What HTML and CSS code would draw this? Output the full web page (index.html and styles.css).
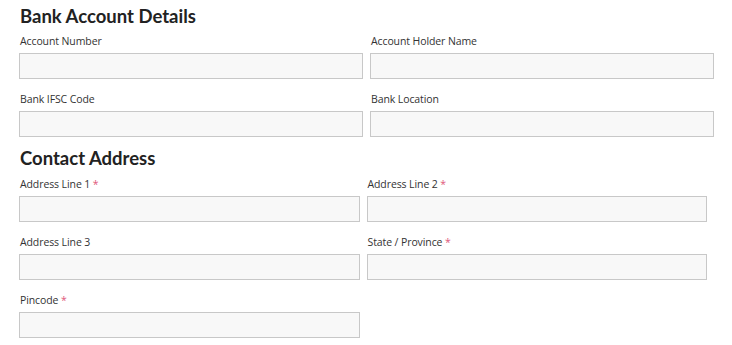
FILE: index.html
```html
<!DOCTYPE html>
<html>
<head>
<meta charset="utf-8">
<link rel="stylesheet" href="styles.css">
</head>
<body>
<div class="page">
  <section class="section section-bank">
    <h2 class="title">Bank Account Details</h2>
    <div class="grid">
      <div class="field"><label class="label">Account Number</label><input class="input" type="text"></div>
      <div class="field"><label class="label">Account Holder Name</label><input class="input" type="text"></div>
      <div class="field"><label class="label">Bank IFSC Code</label><input class="input" type="text"></div>
      <div class="field"><label class="label">Bank Location</label><input class="input" type="text"></div>
    </div>
  </section>
  <section class="section section-address">
    <h2 class="title">Contact Address</h2>
    <div class="grid">
      <div class="field"><label class="label">Address Line 1 <span class="req">*</span></label><input class="input" type="text"></div>
      <div class="field"><label class="label">Address Line 2 <span class="req">*</span></label><input class="input" type="text"></div>
      <div class="field"><label class="label">Address Line 3</label><input class="input" type="text"></div>
      <div class="field"><label class="label">State / Province <span class="req">*</span></label><input class="input" type="text"></div>
      <div class="field"><label class="label">Pincode <span class="req">*</span></label><input class="input" type="text"></div>
    </div>
  </section>
</div>
</body>
</html>
```

FILE: styles.css
```css
html, body {
  margin: 0;
  padding: 0;
  background: #ffffff;
}
body {
  font-family: "Open Sans", "Noto Sans", "Liberation Sans", sans-serif;
  color: #333333;
}
.page {
  padding: 4px 0 0 19px;
}
.section-bank {
  width: 695px;
}
.section-address {
  width: 688px;
  margin-top: 9px;
}
.title {
  margin: 0 0 6px 1px;
  font-family: "Lato", "Open Sans", sans-serif;
  font-size: 18.5px;
  line-height: 24px;
  font-weight: 700;
  color: #222222;
}
.section-address .title {
  margin-bottom: 7px;
}
.grid {
  display: grid;
  grid-template-columns: 1fr 1fr;
  column-gap: 7px;
  row-gap: 13px;
}
.field {
  display: flex;
  flex-direction: column;
  gap: 4px;
}
.label {
  display: block;
  padding-left: 1px;
  font-size: 10.5px;
  line-height: 15px;
  color: #333333;
  letter-spacing: -0.1px;
}
.req {
  color: #e0577a;
}
.input {
  box-sizing: border-box;
  display: block;
  width: 100%;
  height: 26px;
  margin: 0;
  padding: 0 6px;
  border: 1px solid #c8c8c8;
  border-radius: 0;
  background: #f8f8f8;
  font: inherit;
  outline: none;
}
```
